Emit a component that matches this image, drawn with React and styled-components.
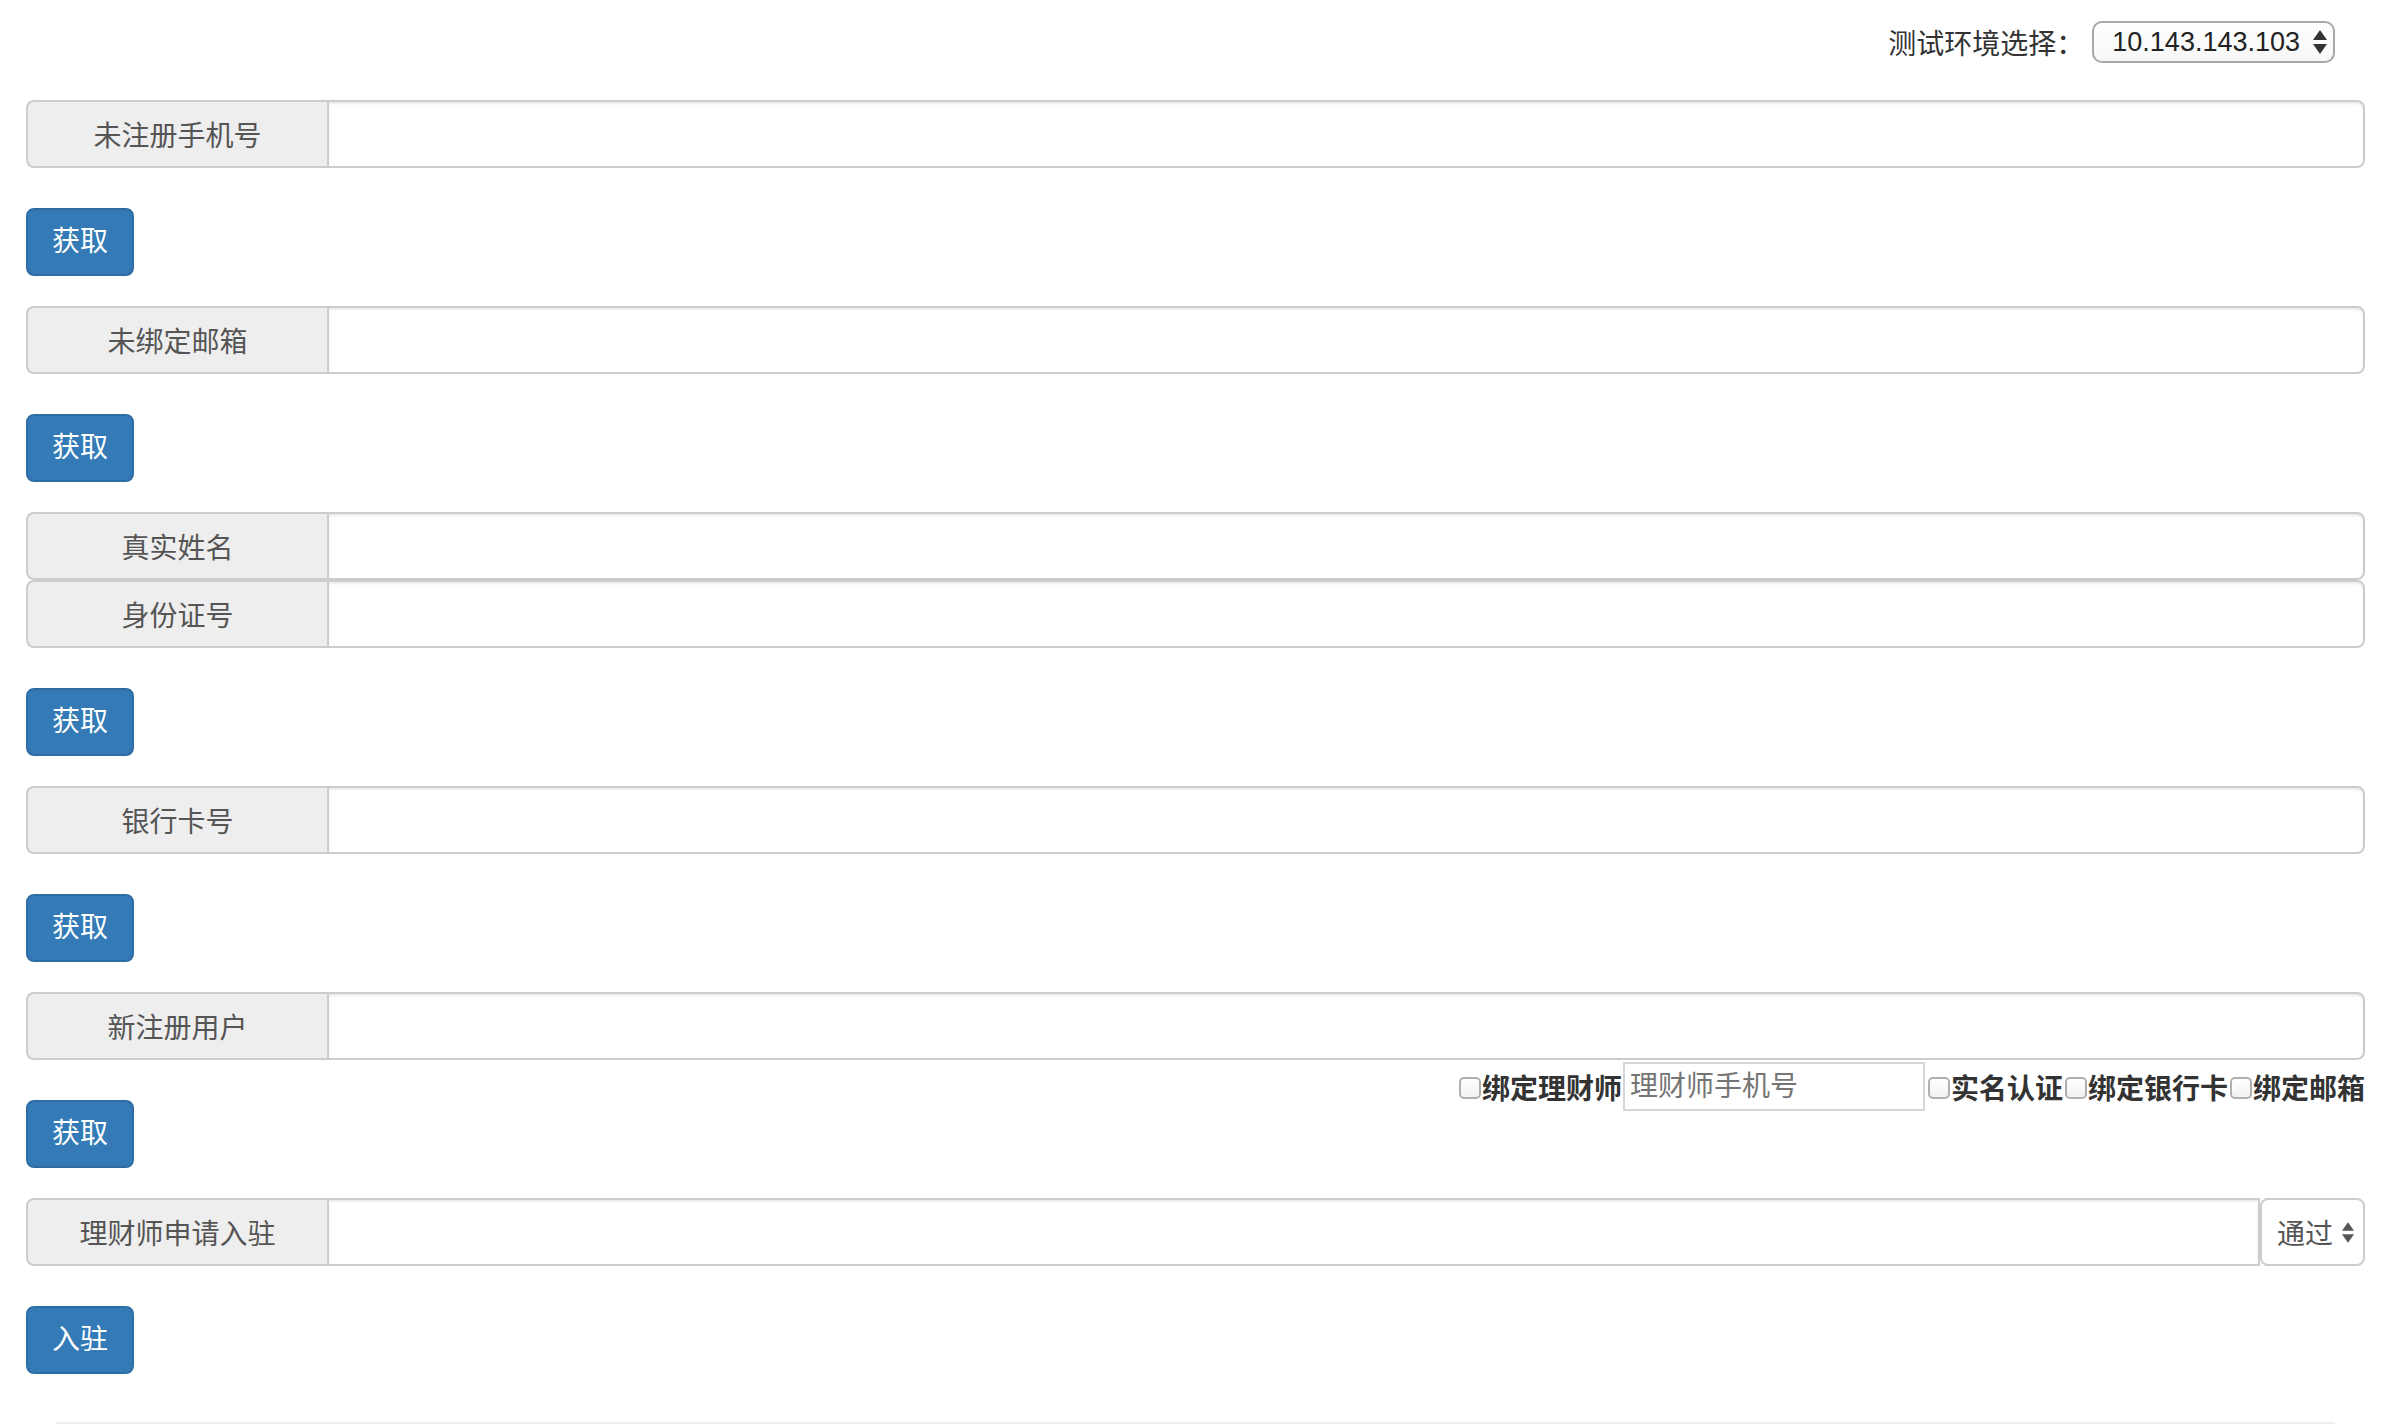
import React from "react";
import styled, { createGlobalStyle } from "styled-components";

const GlobalStyle = createGlobalStyle`
  body {
    margin: 0;
    background: #fff;
    color: #333;
    font-family: "Liberation Sans", "Noto Sans CJK SC", sans-serif;
  }
  * {
    box-sizing: border-box;
  }
`;

const sections = [
  { fields: ["未注册手机号"], action: "获取" },
  { fields: ["未绑定邮箱"], action: "获取" },
  { fields: ["真实姓名", "身份证号"], action: "获取" },
  { fields: ["银行卡号"], action: "获取" },
  { fields: ["新注册用户"], action: "获取", options: true },
  { fields: ["理财师申请入驻"], action: "入驻", status: "通过" },
];

const Arrows = ({ width, height }) => (
  <svg width={width} height={height} viewBox="0 0 14 24">
    <polygon points="0,10 7,0 14,10" fill="currentColor" />
    <polygon points="0,14 14,14 7,24" fill="currentColor" />
  </svg>
);

const App = () => {
  return (
    <Page>
      <GlobalStyle />
      <Header>
        <EnvLabel>测试环境选择：</EnvLabel>
        <EnvSelect>
          <span>10.143.143.103</span>
          <Arrows width={14} height={24} />
        </EnvSelect>
      </Header>

      {sections.map((section, i) => (
        <Section key={i}>
          {section.fields.map((field) => (
            <Group key={field}>
              <Addon>{field}</Addon>
              <FieldInput type="text" $square={!!section.status} />
              {section.status && (
                <StatusSelect>
                  <span>{section.status}</span>
                  <Arrows width={12} height={21} />
                </StatusSelect>
              )}
            </Group>
          ))}
          <ActionRow>
            <PrimaryButton type="button">{section.action}</PrimaryButton>
            {section.options && (
              <Options>
                <Check type="checkbox" />
                <OptionText>绑定理财师</OptionText>
                <PhoneInput type="text" placeholder="理财师手机号" />
                <Check type="checkbox" />
                <OptionText>实名认证</OptionText>
                <Check type="checkbox" />
                <OptionText>绑定银行卡</OptionText>
                <Check type="checkbox" />
                <OptionText>绑定邮箱</OptionText>
              </Options>
            )}
          </ActionRow>
        </Section>
      ))}

      <Divider />
    </Page>
  );
};

const Page = styled.div`
  padding: 0 25px 0 26px;
`;
const Header = styled.div`
  display: flex;
  justify-content: flex-end;
  align-items: center;
  height: 42px;
  margin: 21px 30px 37px 0;
`;
const EnvLabel = styled.span`
  font-size: 28px;
  color: #333;
  margin-right: 8px;
`;
const EnvSelect = styled.div`
  display: flex;
  align-items: center;
  height: 42px;
  padding: 0 6px 0 18px;
  border: 2px solid #a8a8a8;
  border-radius: 10px;
  background: linear-gradient(#fff, #f7f7f7);
  font-size: 27px;
  color: #222;
  svg {
    margin-left: 13px;
    color: #333;
  }
`;
const Section = styled.div`
  margin-bottom: 30px;
`;
const Group = styled.div`
  display: flex;
  height: 68px;
`;
const Addon = styled.div`
  flex: none;
  width: 301px;
  display: flex;
  align-items: center;
  justify-content: center;
  background: #eee;
  border: 2px solid #ccc;
  border-right: 0;
  border-radius: 8px 0 0 8px;
  color: #555;
  font-size: 28px;
`;
const FieldInput = styled.input`
  flex: 1;
  min-width: 0;
  height: 100%;
  border: 2px solid #ccc;
  border-radius: ${(p) => (p.$square ? "0" : "0 8px 8px 0")};
  box-shadow: inset 0 2px 2px rgba(0, 0, 0, 0.075);
  padding: 0 24px;
  font-size: 28px;
  font-family: inherit;
  color: #555;
  outline: none;
`;
const StatusSelect = styled.div`
  flex: none;
  width: 105px;
  display: flex;
  align-items: center;
  justify-content: space-between;
  padding: 0 9px 0 15px;
  border: 2px solid #ccc;
  border-radius: 8px;
  background: #fff;
  color: #555;
  font-size: 28px;
`;
const ActionRow = styled.div`
  display: flex;
  justify-content: space-between;
  align-items: flex-start;
`;
const PrimaryButton = styled.button`
  margin-top: 40px;
  height: 68px;
  padding: 0 24px;
  background: #337ab7;
  border: 2px solid #2e6da4;
  border-radius: 8px;
  color: #fff;
  font-size: 28px;
  font-family: inherit;
  line-height: 1;
  cursor: pointer;
`;
const Options = styled.div`
  display: flex;
  align-items: center;
  margin-top: 2px;
`;
const Check = styled.input`
  appearance: none;
  width: 22px;
  height: 22px;
  margin: 2px 1px 0 2px;
  border: 2px solid #b0b0b0;
  border-radius: 5px;
  background: linear-gradient(#fff, #f1f1f1);
`;
const OptionText = styled.span`
  font-size: 28px;
  font-weight: bold;
  color: #333;
`;
const PhoneInput = styled.input`
  width: 302px;
  height: 49px;
  margin: 0 1px;
  padding: 0 5px;
  border: 2px solid #d6d6d6;
  font-size: 28px;
  font-family: inherit;
  outline: none;
  &::placeholder {
    color: #757575;
  }
`;
const Divider = styled.hr`
  margin: 48px 30px 0;
  height: 0;
  border: 0;
  border-top: 2px solid #eee;
`;

export default App;
